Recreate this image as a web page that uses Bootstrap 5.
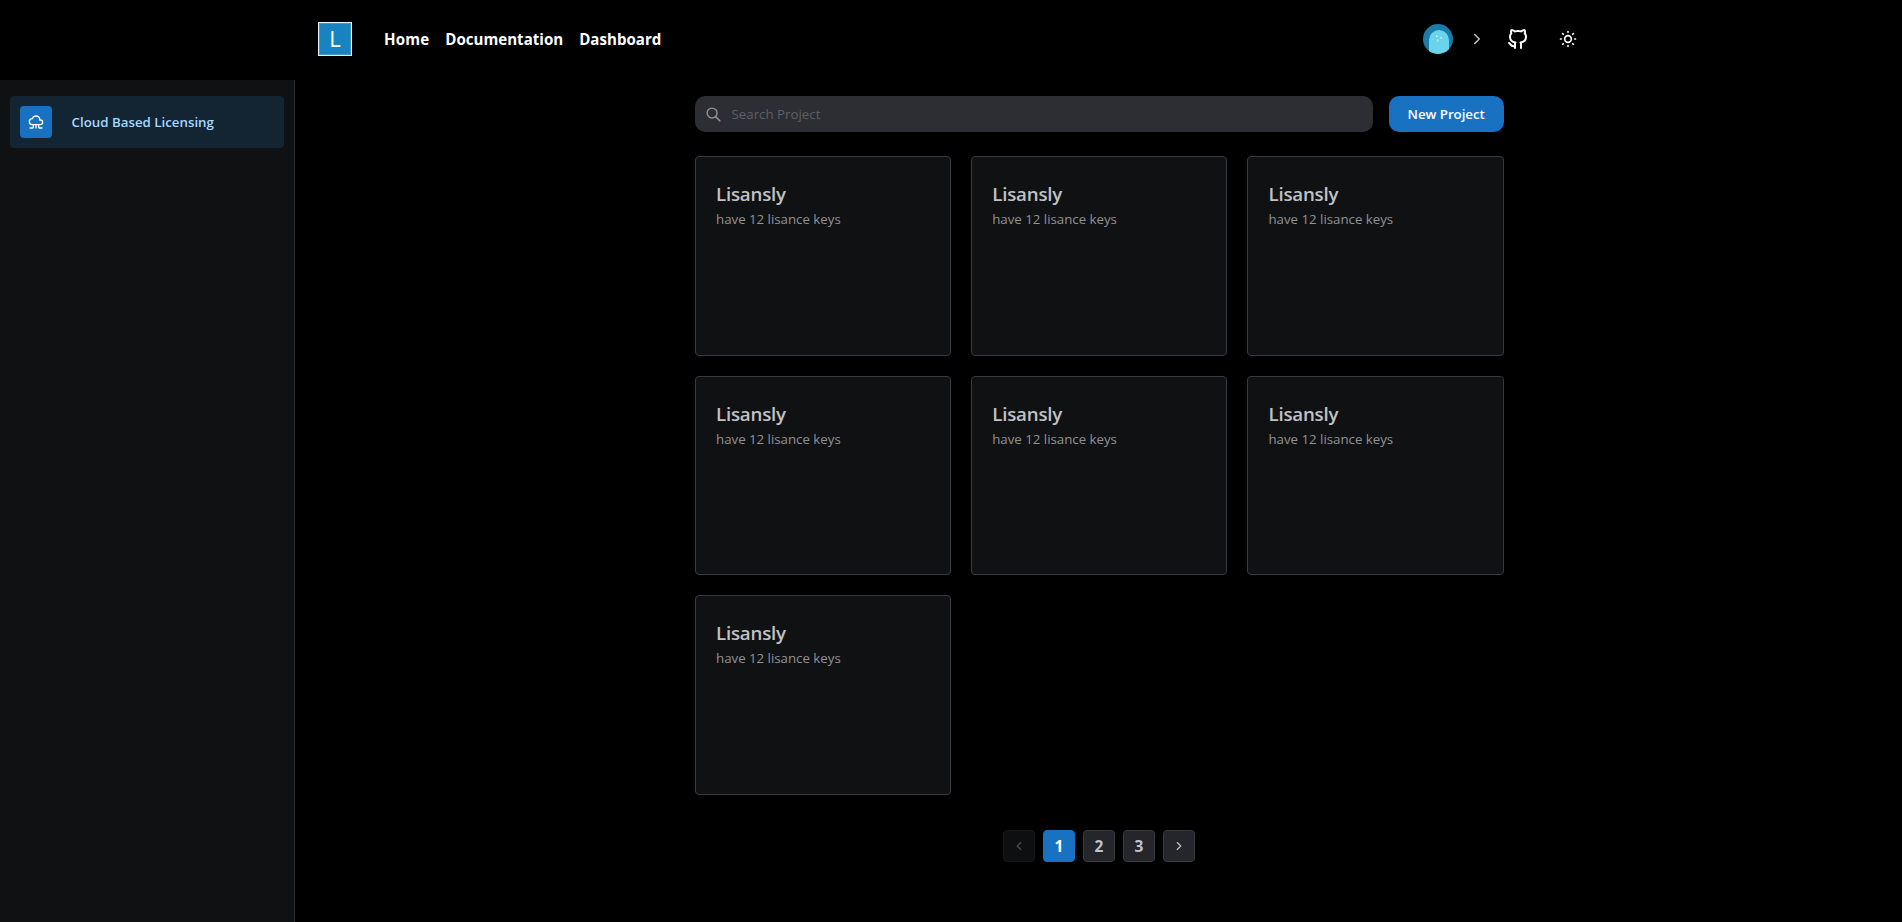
<!DOCTYPE html>
<html lang="en" data-bs-theme="dark">
<head>
<meta charset="utf-8">
<meta name="viewport" content="width=device-width, initial-scale=1">
<title>Lisansly Dashboard</title>
<link href="https://cdn.jsdelivr.net/npm/bootstrap@5.3.0/dist/css/bootstrap.min.css" rel="stylesheet">
<script src="https://cdn.jsdelivr.net/npm/bootstrap@5.3.0/dist/js/bootstrap.bundle.min.js" defer></script>
<style>
  body { background: #000; font-family: "Open Sans", "Noto Sans", sans-serif; font-size: 13.3px; color: #c1c2c5; overflow: hidden; }
  svg.line { fill: none; stroke: currentColor; stroke-width: 2; stroke-linecap: round; stroke-linejoin: round; display: block; flex: none; }
  .topbar { height: 80px; padding: 0 324px 2px 318px; }
  .brand { width: 34px; height: 34px; background: #1883c1; border: 1px solid #e4f1f8; box-shadow: inset 0 0 0 1px #3c97cb; margin-right: 32px; }
  .brand span { font: 22px/30px "Open Sans", sans-serif; color: #fff; }
  .main-link { font-size: 15.1px; font-weight: 700; color: #fff; line-height: 24px; }
  .main-link:first-child { letter-spacing: .15px; }
  .tool-chevron { color: #c1c2c5; margin: 0 20px 0 15px; }
  .tool-sun { margin-left: 28px; }
  .sidebar { width: 295px; height: 842px; background: #101113; border-right: 1px solid #2c2e33; padding: 16px 10px; }
  .side-item { height: 52px; border-radius: 4px; background: #132433; color: #a5d8ff; font-weight: 650; padding: 10px; }
  .side-icon { width: 32px; height: 32px; border-radius: 4px; background: #1971c2; color: #fff; margin-right: 19.5px; }
  .side-label { padding-top: 2px; }
  .content-col { width: 808.66px; margin-left: 400px; padding-top: 16px; }
  .search-field { height: 36px; border-radius: 10px; background: #2c2e33; padding-left: 9.5px; color: #909296; }
  .search-field input { color: #c1c2c5; font-size: 13.3px; padding: 2px 0 0 10px; outline: 0; }
  .search-field input::placeholder { color: #5c5f66; opacity: 1; }
  .new-btn { width: 115px; height: 36px; border-radius: 10px; background: #1971c2; color: #fff; font-size: 13.3px; font-weight: 650; letter-spacing: -.05px; border: 0; padding: 0; line-height: 36px; }
  .project-grid { display: grid; grid-template-columns: repeat(3, 1fr); grid-auto-rows: 199.5px; gap: 20px; margin-top: 24px; }
  .project { background: #101113; border: 1px solid #373a40; border-radius: 4px; padding: 21px 20px; }
  .project h2 { font-size: 18.7px; font-weight: 650; letter-spacing: -.2px; line-height: 32px; margin: 0; color: #c1c2c5; }
  .project p { font-size: 13.3px; letter-spacing: -.02px; line-height: 18px; margin: 0; color: #909296; }
  .pager { gap: 8px; margin: 35px 1px 0 0; }
  .page-btn { width: 32px; height: 32px; border-radius: 4px; background: #25262b; border: 1px solid #373a40; color: #c1c2c5; font-size: 15.5px; font-weight: 700; line-height: 31px; padding: 0; }
  .page-btn.current { background: #1971c2; border-color: #1971c2; color: #fff; }
  .page-btn.off { opacity: .4; }
</style>
</head>
<body>
<header class="topbar d-flex align-items-center">
  <a class="brand d-flex justify-content-center text-decoration-none" href="#"><span>L</span></a>
  <nav class="d-flex gap-3">
    <a class="main-link text-decoration-none" href="#">Home</a>
    <a class="main-link text-decoration-none" href="#">Documentation</a>
    <a class="main-link text-decoration-none" href="#">Dashboard</a>
  </nav>
  <div class="d-flex align-items-center ms-auto text-white">
    <svg width="30" height="30" viewBox="0 0 30 30"><defs><clipPath id="face"><circle cx="15" cy="15" r="15"/></clipPath></defs><g clip-path="url(#face)"><path fill="#1c7ca8" d="M0 0h30v30H0z"/><path fill="#6bd4ea" d="M6 30V16a10 10 0 0 1 20 0v14z"/><path fill="#d4f4fa" d="M13 11.500h1.500v1.500H13zM17.300 13h1.500v1.500h-1.500zM14.300 15.500h1v2h-1z"/></g></svg>
    <svg class="line tool-chevron" width="18" height="18" viewBox="0 0 24 24"><path d="M9 6l6 6-6 6"/></svg>
    <svg class="line" width="24" height="24" viewBox="0 0 24 24"><path d="M9 19c-4.300 1.400-4.300-2.500-6-3m12 5v-3.500c0-1 .1-1.400-.5-2 2.800-.3 5.500-1.400 5.500-6a4.600 4.600 0 0 0-1.300-3.200 4.200 4.200 0 0 0-.1-3.200s-1.100-.3-3.500 1.300a12.300 12.300 0 0 0-6.200 0C6.500 2.800 5.400 3.100 5.400 3.100a4.200 4.200 0 0 0-.1 3.200A4.600 4.600 0 0 0 4 9.500c0 4.600 2.700 5.700 5.500 6-.6.6-.6 1.200-.5 2V21"/></svg>
    <svg class="line tool-sun" width="20" height="20" viewBox="0 0 24 24"><circle cx="12" cy="12" r="4"/><path d="M3 12h1m8-9v1m8 8h1m-9 8v1M5.600 5.600l.7.7m12.100-.7-.7.7m0 11.400.7.7m-12.100-.7-.7.7"/></svg>
  </div>
</header>
<div class="d-flex">
  <aside class="sidebar flex-shrink-0">
    <a class="side-item d-flex align-items-center text-decoration-none" href="#">
      <span class="side-icon d-flex align-items-center justify-content-center"><svg class="line" width="16" height="16" viewBox="0 0 24 24"><path d="M6.657 16C4.085 16 2 13.993 2 11.517c0-2.475 2.085-4.482 4.657-4.482.393-1.762 1.794-3.200 3.675-3.773 1.880-.572 3.956-.193 5.444 1 1.488 1.190 2.162 3.007 1.770 4.769h.99c1.913 0 3.464 1.560 3.464 3.486 0 1.927-1.551 3.487-3.465 3.487H6.657M12 16v5M16 16v4a1 1 0 0 0 1 1h4M8 16v4a1 1 0 0 1-1 1H3"/></svg></span>
      <span class="side-label">Cloud Based Licensing</span>
    </a>
  </aside>
  <main class="content-col">
    <div class="d-flex gap-3">
      <label class="search-field d-flex align-items-center flex-grow-1">
        <svg class="line" width="17" height="17" viewBox="0 0 24 24"><circle cx="10" cy="10" r="7"/><path d="M21 21l-6-6"/></svg>
        <input class="bg-transparent border-0 flex-grow-1" type="text" placeholder="Search Project">
      </label>
      <button class="btn new-btn">New Project</button>
    </div>
    <section class="project-grid">
      <article class="project"><h2>Lisansly</h2><p>have 12 lisance keys</p></article>
      <article class="project"><h2>Lisansly</h2><p>have 12 lisance keys</p></article>
      <article class="project"><h2>Lisansly</h2><p>have 12 lisance keys</p></article>
      <article class="project"><h2>Lisansly</h2><p>have 12 lisance keys</p></article>
      <article class="project"><h2>Lisansly</h2><p>have 12 lisance keys</p></article>
      <article class="project"><h2>Lisansly</h2><p>have 12 lisance keys</p></article>
      <article class="project"><h2>Lisansly</h2><p>have 12 lisance keys</p></article>
    </section>
    <nav class="pager d-flex justify-content-center">
      <button class="btn page-btn off d-flex align-items-center justify-content-center" aria-label="Previous"><svg class="line" width="14" height="14" viewBox="0 0 24 24"><path d="M15 6l-6 6 6 6"/></svg></button>
      <button class="btn page-btn current">1</button>
      <button class="btn page-btn">2</button>
      <button class="btn page-btn">3</button>
      <button class="btn page-btn d-flex align-items-center justify-content-center" aria-label="Next"><svg class="line" width="14" height="14" viewBox="0 0 24 24"><path d="M9 6l6 6-6 6"/></svg></button>
    </nav>
  </main>
</div>
</body>
</html>
